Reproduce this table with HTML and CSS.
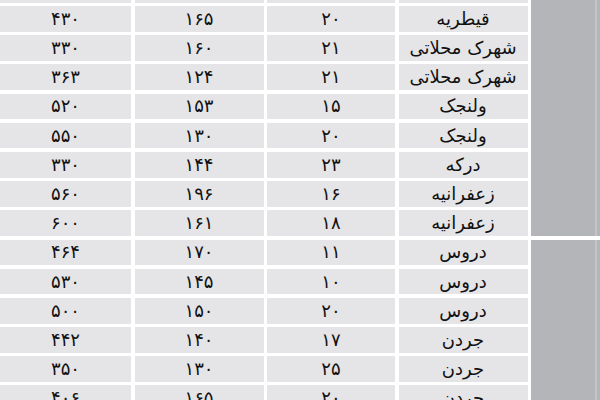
FILE: index.html
```html
<!DOCTYPE html>
<html lang="fa" dir="rtl">
<head>
<meta charset="utf-8">
<link rel="stylesheet" href="styles.css">
</head>
<body>
<div class="table">
  <div class="group g1"></div>
  <div class="cell"></div><div class="cell"></div><div class="cell"></div><div class="cell"></div>
  <div class="cell">قیطریه</div><div class="cell">۲۰</div><div class="cell">۱۶۵</div><div class="cell">۴۳۰</div>
  <div class="cell">شهرک محلاتی</div><div class="cell">۲۱</div><div class="cell">۱۶۰</div><div class="cell">۳۳۰</div>
  <div class="cell">شهرک محلاتی</div><div class="cell">۲۱</div><div class="cell">۱۲۴</div><div class="cell">۳۶۳</div>
  <div class="cell">ولنجک</div><div class="cell">۱۵</div><div class="cell">۱۵۳</div><div class="cell">۵۲۰</div>
  <div class="cell">ولنجک</div><div class="cell">۲۰</div><div class="cell">۱۳۰</div><div class="cell">۵۵۰</div>
  <div class="cell">درکه</div><div class="cell">۲۳</div><div class="cell">۱۴۴</div><div class="cell">۳۳۰</div>
  <div class="cell">زعفرانیه</div><div class="cell">۱۶</div><div class="cell">۱۹۶</div><div class="cell">۵۶۰</div>
  <div class="cell">زعفرانیه</div><div class="cell">۱۸</div><div class="cell">۱۶۱</div><div class="cell">۶۰۰</div>
  <div class="group g2"></div>
  <div class="cell">دروس</div><div class="cell">۱۱</div><div class="cell">۱۷۰</div><div class="cell">۴۶۴</div>
  <div class="cell">دروس</div><div class="cell">۱۰</div><div class="cell">۱۴۵</div><div class="cell">۵۳۰</div>
  <div class="cell">دروس</div><div class="cell">۲۰</div><div class="cell">۱۵۰</div><div class="cell">۵۰۰</div>
  <div class="cell">جردن</div><div class="cell">۱۷</div><div class="cell">۱۴۰</div><div class="cell">۴۴۲</div>
  <div class="cell">جردن</div><div class="cell">۲۵</div><div class="cell">۱۳۰</div><div class="cell">۳۵۰</div>
  <div class="cell">جردن</div><div class="cell">۲۰</div><div class="cell">۱۶۵</div><div class="cell">۴۰۶</div>
</div>
</body>
</html>
```

FILE: styles.css
```css
html, body {
  margin: 0;
  padding: 0;
  background: #ffffff;
  overflow: hidden;
}

.table {
  direction: rtl;
  display: grid;
  grid-template-columns: 69px 129px 128px 129px 131px;
  grid-auto-rows: 25.7px;
  column-gap: 3.5px;
  row-gap: 3.5px;
  margin-top: -23.2px;
  font-family: "DejaVu Sans", sans-serif;
  font-size: 18px;
  color: #111111;
}

.group {
  grid-column: 1;
  background: linear-gradient(to left, #b4b5b9 0, #b4b5b9 3px, #c3c4c7 3px, #c3c4c7 5px, #b4b5b9 5px);
}

.g1 { grid-row: span 9; }
.g2 { grid-row: span 6; }

.cell {
  background: #e5e5e7;
  display: flex;
  align-items: center;
  justify-content: center;
  line-height: 1;
}
```
